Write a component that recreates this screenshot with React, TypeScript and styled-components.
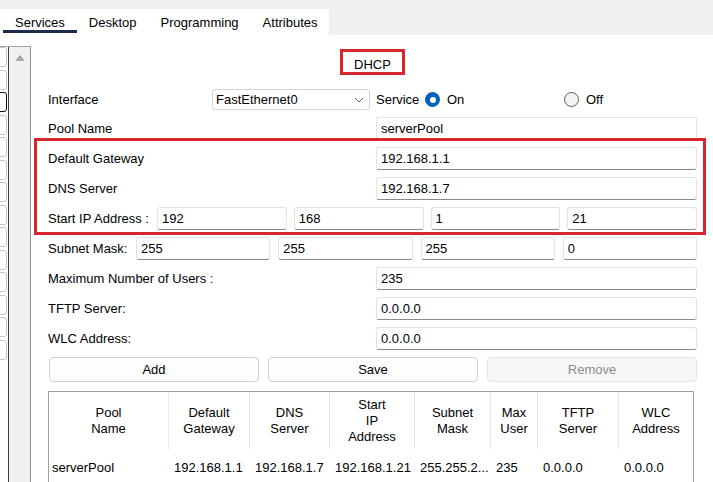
import * as React from 'react';
import styled, { createGlobalStyle } from 'styled-components';

const GlobalStyle = createGlobalStyle`
  html, body {
    margin: 0;
    padding: 0;
    background: #fff;
  }
  body {
    font-family: "Liberation Sans", Arial, sans-serif;
    font-size: 13px;
    color: #000;
  }
`;

const Window = styled.div`
  width: 713px;
  height: 482px;
  overflow: hidden;
  display: flex;
  flex-direction: column;
  background: #fff;
`;

const TabBar = styled.div`
  height: 35px;
  flex-shrink: 0;
  background: #f0f0f0;
  display: flex;
  align-items: flex-end;
`;

const TabStrip = styled.div`
  width: 329px;
  height: 26px;
  box-sizing: border-box;
  background: #fff;
  display: flex;
  padding-left: 3px;
`;

const Tab = styled.div<{ $active?: boolean }>`
  height: 24px;
  box-sizing: border-box;
  padding: 5px 12px 0;
  display: flex;
  align-items: center;
  color: #000;
  border-bottom: 3px solid ${(p) => (p.$active ? '#1c2c4c' : 'transparent')};
`;

const Main = styled.div`
  flex: 1;
  display: flex;
  min-height: 0;
`;

const Sidebar = styled.div`
  width: 31px;
  flex-shrink: 0;
  padding-top: 11px;
  display: flex;
  flex-direction: column;
  box-sizing: border-box;
`;

const SideBox = styled.div`
  flex: 1;
  display: flex;
  border-top: 1px solid #a8a8a8;
  border-right: 1px solid #8f8f8f;
`;

const ItemList = styled.div`
  width: 8px;
  overflow: hidden;
  display: flex;
  flex-direction: column;
  gap: 2.5px;
`;

const Item = styled.div<{ $selected?: boolean }>`
  flex-shrink: 0;
  width: 16px;
  height: 20px;
  margin-left: -9px;
  box-sizing: border-box;
  background: #fff;
  border: 1px solid ${(p) => (p.$selected ? '#111' : '#c6c6c6')};
  border-radius: 3px;
`;

const Divider = styled.div`
  width: 1px;
  background: #3c3c3c;
`;

const ScrollTrack = styled.div`
  flex: 1;
  background: #f0f0f0;
  display: flex;
  justify-content: center;
  padding-top: 8px;
`;

const UpArrow = styled.div`
  width: 0;
  height: 0;
  border-left: 5px solid transparent;
  border-right: 5px solid transparent;
  border-bottom: 6px solid #a6a6a6;
`;

const Content = styled.div`
  flex: 1;
  padding: 14px 16px 0 17px;
  display: flex;
  flex-direction: column;
  min-width: 0;
`;

const TitleRow = styled.div`
  display: flex;
  justify-content: center;
`;

const TitleBox = styled.div`
  width: 65px;
  height: 26px;
  box-sizing: border-box;
  border: 3px solid #d7262e;
  display: flex;
  align-items: center;
  justify-content: center;
  padding-top: 4px;
`;

const Rule = styled.div`
  height: 1px;
  background: #a0a0a0;
  margin-top: 4px;
`;

const Rows = styled.div`
  display: flex;
  flex-direction: column;
  gap: 7px;
  margin-top: 10px;
`;

const Highlight = styled.div`
  position: relative;
  display: flex;
  flex-direction: column;
  gap: 7px;
  &::after {
    content: '';
    position: absolute;
    top: -9px;
    left: -14px;
    right: -9px;
    bottom: -5px;
    border: 3px solid #d7262e;
    pointer-events: none;
  }
`;

const InterfaceRow = styled.div`
  height: 21px;
  display: flex;
  align-items: center;
`;

const Label = styled.div<{ $width?: number }>`
  ${(p) => (p.$width ? `width: ${p.$width}px; flex-shrink: 0;` : '')}
  white-space: nowrap;
`;

const Select = styled.div`
  width: 158px;
  height: 21px;
  box-sizing: border-box;
  border: 1px solid #d4d4d4;
  border-radius: 3px;
  background: #fff;
  display: flex;
  align-items: center;
  justify-content: space-between;
  padding: 0 5px 0 3px;
`;

const Option = styled.div<{ $width?: number }>`
  display: flex;
  align-items: center;
  gap: 7px;
  ${(p) => (p.$width ? `width: ${p.$width}px;` : '')}
`;

const Radio = styled.span<{ $checked?: boolean }>`
  width: 15px;
  height: 15px;
  box-sizing: border-box;
  border-radius: 50%;
  position: relative;
  background: ${(p) => (p.$checked ? '#005fb8' : '#f3f3f3')};
  border: 1px solid ${(p) => (p.$checked ? '#005fb8' : '#5c5c5c')};
  ${(p) =>
    p.$checked
      ? `&::after {
    content: '';
    position: absolute;
    left: 3.5px;
    top: 3.5px;
    width: 6px;
    height: 6px;
    border-radius: 50%;
    background: #fff;
  }`
      : ''}
`;

const FieldRow = styled.div`
  display: grid;
  grid-template-columns: 328px 1fr;
  align-items: center;
`;

const OctetRow = styled.div<{ $label: number; $gap: number }>`
  display: grid;
  grid-template-columns: ${(p) => p.$label}px repeat(4, 1fr);
  column-gap: ${(p) => p.$gap}px;
  align-items: center;
`;

const Input = styled.input`
  height: 23px;
  width: 100%;
  min-width: 0;
  box-sizing: border-box;
  margin: 0;
  border: 1px solid #e2e2e2;
  border-bottom-color: #8a8a8a;
  border-radius: 3px;
  padding: 0 4px;
  font: inherit;
  color: #000;
  background: #fff;
  outline: none;
`;

const ButtonRow = styled.div`
  display: grid;
  grid-template-columns: repeat(3, 1fr);
  gap: 9px;
  padding-left: 1px;
`;

const Button = styled.button`
  height: 25px;
  margin: 0;
  box-sizing: border-box;
  border: 1px solid #d0d0d0;
  border-radius: 4px;
  background: #fdfdfd;
  font: inherit;
  color: #000;
  padding: 0;
  &:disabled {
    background: #f7f7f7;
    border-color: #e4e4e4;
    color: #8c8c8c;
  }
`;

const Table = styled.div`
  flex: 1;
  margin: 9px 3px 0 0;
  border: 1px solid #a0a0a0;
  border-bottom: none;
`;

const columns = '120px 81px 80px 85px 76px 47px 81px 1fr';

const HeadRow = styled.div`
  display: grid;
  grid-template-columns: ${columns};
  height: 57px;
`;

const HeadCell = styled.div`
  display: flex;
  align-items: center;
  justify-content: center;
  text-align: center;
  line-height: 16px;
  border-right: 1px solid #e8e8e8;
  &:last-child {
    border-right: none;
  }
`;

const DataRow = styled.div`
  display: grid;
  grid-template-columns: ${columns};
  height: 36px;
  align-items: center;
`;

const DataCell = styled.div`
  padding-left: 5px;
  white-space: nowrap;
  overflow: hidden;
  &:first-child {
    padding-left: 3px;
  }
`;

const Chevron = () => (
  <svg width="10" height="6" viewBox="0 0 10 6">
    <path d="M1 1l4 4 4-4" fill="none" stroke="#606060" strokeWidth="1" />
  </svg>
);

const headers: React.ReactNode[] = [
  <>Pool<br />Name</>,
  <>Default<br />Gateway</>,
  <>DNS<br />Server</>,
  <>Start<br />IP<br />Address</>,
  <>Subnet<br />Mask</>,
  <>Max<br />User</>,
  <>TFTP<br />Server</>,
  <>WLC<br />Address</>,
];

const pool = ['serverPool', '192.168.1.1', '192.168.1.7', '192.168.1.21', '255.255.2...', '235', '0.0.0.0', '0.0.0.0'];

const App = () => (
  <Window>
    <GlobalStyle />
    <TabBar>
      <TabStrip>
        <Tab $active>Services</Tab>
        <Tab>Desktop</Tab>
        <Tab>Programming</Tab>
        <Tab>Attributes</Tab>
      </TabStrip>
    </TabBar>
    <Main>
      <Sidebar>
        <SideBox>
          <ItemList>
            {Array.from({ length: 14 }).map((_, i) => (
              <Item key={i} $selected={i === 2} />
            ))}
          </ItemList>
          <Divider />
          <ScrollTrack>
            <UpArrow />
          </ScrollTrack>
        </SideBox>
      </Sidebar>
      <Content>
        <TitleRow>
          <TitleBox>DHCP</TitleBox>
        </TitleRow>
        <Rule />
        <Rows>
          <InterfaceRow>
            <Label $width={164}>Interface</Label>
            <Select>
              FastEthernet0
              <Chevron />
            </Select>
            <Label $width={49} style={{ marginLeft: 6 }}>Service</Label>
            <Option $width={139}>
              <Radio $checked />
              On
            </Option>
            <Option>
              <Radio />
              Off
            </Option>
          </InterfaceRow>
          <FieldRow>
            <Label>Pool Name</Label>
            <Input readOnly value="serverPool" />
          </FieldRow>
          <Highlight>
            <FieldRow>
              <Label>Default Gateway</Label>
              <Input readOnly value="192.168.1.1" />
            </FieldRow>
            <FieldRow>
              <Label>DNS Server</Label>
              <Input readOnly value="192.168.1.7" />
            </FieldRow>
            <OctetRow $label={102} $gap={7}>
              <Label>Start IP Address :</Label>
              {['192', '168', '1', '21'].map((v, i) => (
                <Input key={i} readOnly value={v} />
              ))}
            </OctetRow>
          </Highlight>
          <OctetRow $label={80} $gap={8}>
            <Label>Subnet Mask:</Label>
            {['255', '255', '255', '0'].map((v, i) => (
              <Input key={i} readOnly value={v} />
            ))}
          </OctetRow>
          <FieldRow>
            <Label>Maximum Number of Users :</Label>
            <Input readOnly value="235" />
          </FieldRow>
          <FieldRow>
            <Label>TFTP Server:</Label>
            <Input readOnly value="0.0.0.0" />
          </FieldRow>
          <FieldRow>
            <Label>WLC Address:</Label>
            <Input readOnly value="0.0.0.0" />
          </FieldRow>
          <ButtonRow>
            <Button>Add</Button>
            <Button>Save</Button>
            <Button disabled>Remove</Button>
          </ButtonRow>
        </Rows>
        <Table>
          <HeadRow>
            {headers.map((h, i) => (
              <HeadCell key={i}>{h}</HeadCell>
            ))}
          </HeadRow>
          <DataRow>
            {pool.map((v, i) => (
              <DataCell key={i}>{v}</DataCell>
            ))}
          </DataRow>
        </Table>
      </Content>
    </Main>
  </Window>
);

export default App;
